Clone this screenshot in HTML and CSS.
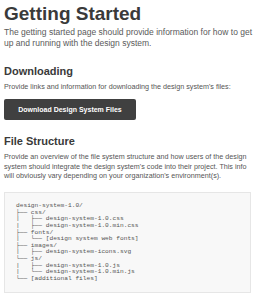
FILE: index.html
```html
<!DOCTYPE html>
<html lang="en">
<head>
<meta charset="utf-8">
<title>Getting Started</title>
<link rel="stylesheet" href="styles.css">
</head>
<body>
<main class="doc">
  <h1 class="doc-title">Getting Started</h1>
  <p class="lead">The getting started page should provide information for how to get up and running with the design system.</p>

  <h2 class="section-title section-title--first">Downloading</h2>
  <p class="text">Provide links and information for downloading the design system's files:</p>
  <a class="btn" href="#">Download Design System Files</a>

  <h2 class="section-title">File Structure</h2>
  <p class="text">Provide an overview of the file system structure and how users of the design system should integrate the design system's code into their project. This info will obviously vary depending on your organization's environment(s).</p>
  <pre class="tree">design-system-1.0/
├── css/
|   ├── design-system-1.0.css
|   ├── design-system-1.0.min.css
├── fonts/
|   └── [design system web fonts]
├── images/
|   ├── design-system-icons.svg
└── js/
|   ├── design-system-1.0.js
|   └── design-system-1.0.min.js
└── [additional files]</pre>
</main>
</body>
</html>
```

FILE: styles.css
```css
html, body {
  margin: 0;
  padding: 0;
  background: #ffffff;
}

body {
  font-family: "Liberation Sans", Arial, Helvetica, sans-serif;
  color: #555555;
}

.doc {
  display: flex;
  flex-direction: column;
  align-items: flex-start;
  padding: 3px 4px 0 4px;
}

.doc-title {
  margin: 0;
  font-size: 19px;
  line-height: 22px;
  font-weight: 700;
  color: #3a3a3a;
}

.lead {
  margin: 2px 0 0;
  font-size: 8.5px;
  line-height: 11px;
  color: #5a5a5a;
}

.section-title {
  margin: 15px 0 0;
  font-size: 11px;
  line-height: 13px;
  font-weight: 700;
  color: #3a3a3a;
}

.section-title--first {
  margin-top: 16px;
}

.text {
  margin: 4px 0 0;
  font-size: 7.2px;
  line-height: 9.3px;
  color: #555555;
}

.btn {
  display: inline-block;
  margin-top: 8px;
  width: 132px;
  height: 21px;
  line-height: 21px;
  box-sizing: border-box;
  text-align: center;
  background: #404040;
  color: #ffffff;
  font-size: 7px;
  font-weight: 700;
  text-decoration: none;
  border-radius: 2px;
}

.tree {
  align-self: stretch;
  margin: 12px 3px 0 0;
  padding: 10px 11px;
  background: #f8f8f8;
  border: 1px solid #e6e6e6;
  font-family: "Liberation Mono", "DejaVu Sans Mono", "Courier New", monospace;
  font-size: 6.2px;
  line-height: 6.6px;
  color: #555555;
  white-space: pre;
}
```
